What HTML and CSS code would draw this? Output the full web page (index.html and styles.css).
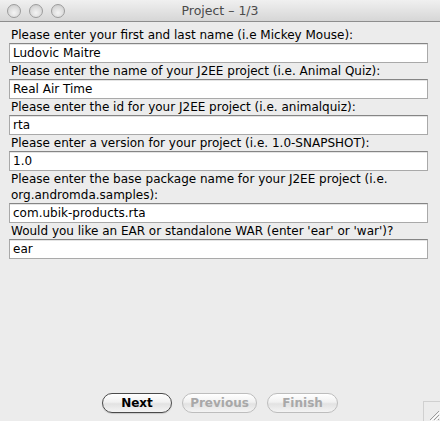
FILE: index.html
```html
<!DOCTYPE html>
<html>
<head>
<meta charset="utf-8">
<link rel="stylesheet" href="styles.css">
</head>
<body>
<div class="window">
  <div class="titlebar">
    <div class="lights">
      <span class="light"></span><span class="light"></span><span class="light"></span>
    </div>
    <div class="title">Project – 1/3</div>
  </div>
  <div class="content">
    <div class="label">Please enter your first and last name (i.e Mickey Mouse):</div>
    <div class="field">Ludovic Maitre</div>
    <div class="label">Please enter the name of your J2EE project (i.e. Animal Quiz):</div>
    <div class="field">Real Air Time</div>
    <div class="label">Please enter the id for your J2EE project (i.e. animalquiz):</div>
    <div class="field">rta</div>
    <div class="label">Please enter a version for your project (i.e. 1.0-SNAPSHOT):</div>
    <div class="field">1.0</div>
    <div class="label">Please enter the base package name for your J2EE project (i.e.<br>org.andromda.samples):</div>
    <div class="field">com.ubik-products.rta</div>
    <div class="label">Would you like an EAR or standalone WAR (enter 'ear' or 'war')?</div>
    <div class="field">ear</div>
  </div>
  <div class="footer">
    <div class="buttons">
      <span class="btn btn-default">Next</span>
      <span class="btn btn-disabled">Previous</span>
      <span class="btn btn-disabled">Finish</span>
    </div>
    <div class="grip">
      <svg width="14" height="14" viewBox="0 0 14 14">
        <path d="M13 4 L4 13 M13 8 L8 13 M13 12 L12 13" stroke="#9a9a9a" stroke-width="1"/>
        <path d="M14 5 L5 14 M14 9 L9 14" stroke="#ffffff" stroke-width="1"/>
      </svg>
    </div>
  </div>
</div>
</body>
</html>
```

FILE: styles.css
```css
html, body {
  margin: 0;
  padding: 0;
}
body {
  font-family: "DejaVu Sans", "Liberation Sans", sans-serif;
  font-size: 12px;
  color: #000;
  background: #ececec;
}
.window {
  width: 440px;
  height: 421px;
  display: flex;
  flex-direction: column;
  background: #ececec;
  overflow: hidden;
}
.titlebar {
  height: 21px;
  border-bottom: 1px solid #8e8e8e;
  background: linear-gradient(#f0f0f0, #d6d6d6);
  display: flex;
  align-items: center;
  position: relative;
}
.lights {
  display: flex;
  gap: 8px;
  padding-left: 7px;
}
.light {
  width: 12px;
  height: 12px;
  border-radius: 50%;
  border: 1px solid #9c9c9c;
  background: radial-gradient(circle at 50% 65%, #f4f4f4 0%, #dcdcdc 55%, #c4c4c4 100%);
}
.title {
  position: absolute;
  left: 0;
  right: 0;
  top: 0;
  line-height: 21px;
  text-align: center;
  font-size: 12.5px;
  color: #4a4a4a;
  pointer-events: none;
}
.content {
  padding: 5px 12px 0 9px;
  display: flex;
  flex-direction: column;
}
.label {
  line-height: 16px;
  padding-left: 2px;
  white-space: nowrap;
}
.field {
  height: 18px;
  line-height: 18px;
  background: #fff;
  border: 1px solid #a9a9a9;
  border-top-color: #858585;
  padding-left: 3px;
  box-shadow: inset 0 1px 0 #e4e4e4;
}
.footer {
  margin-top: auto;
  height: 28px;
  position: relative;
}
.buttons {
  display: flex;
  justify-content: center;
  gap: 10px;
}
.btn {
  height: 18px;
  line-height: 18px;
  border-radius: 10px;
  text-align: center;
  background: linear-gradient(#ffffff 0%, #f1f1f1 45%, #e2e2e2 55%, #f4f4f4 100%);
  font-size: 12px;
}
.btn-default {
  width: 68px;
  border: 1px solid #4a4a4a;
  color: #000;
  font-weight: bold;
  box-shadow: 0 1px 1px rgba(0,0,0,0.15);
}
.btn-disabled {
  border: 1px solid #bdbdbd;
  color: #a8a8a8;
  font-weight: bold;
}
.btn-disabled:nth-child(2) { width: 73px; }
.btn-disabled:nth-child(3) { width: 69px; }
.grip {
  position: absolute;
  right: 0;
  bottom: 0;
  width: 16px;
  height: 19px;
  border-left: 1px solid #d0d0d0;
  border-top: 1px solid #d0d0d0;
  display: flex;
  align-items: flex-end;
  justify-content: flex-end;
}
```
